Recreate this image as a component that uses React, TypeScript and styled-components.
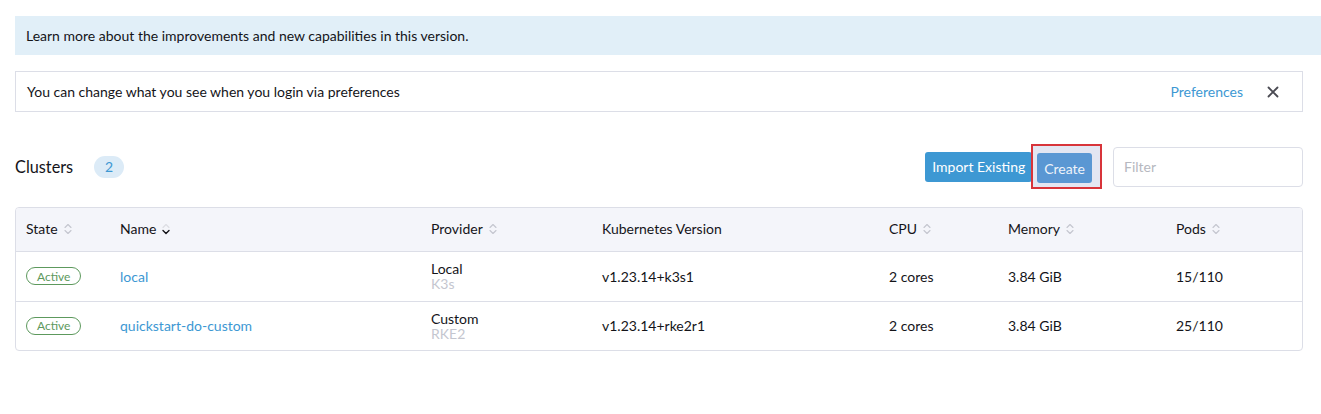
import React from 'react';
import styled, { createGlobalStyle } from 'styled-components';

const GlobalStyle = createGlobalStyle`
  html, body { margin: 0; padding: 0; background: #fff; }
  body {
    font-family: Lato, "Liberation Sans", sans-serif;
    font-size: 14px;
    color: #141419;
  }
  * { box-sizing: border-box; }
`;

type Cluster = {
  name: string;
  provider: string;
  distro: string;
  version: string;
  cpu: string;
  memory: string;
  pods: string;
};

const CLUSTERS: Cluster[] = [
  { name: 'local', provider: 'Local', distro: 'K3s', version: 'v1.23.14+k3s1', cpu: '2 cores', memory: '3.84 GiB', pods: '15/110' },
  { name: 'quickstart-do-custom', provider: 'Custom', distro: 'RKE2', version: 'v1.23.14+rke2r1', cpu: '2 cores', memory: '3.84 GiB', pods: '25/110' },
];

const COLUMNS: { label: string; sort: 'none' | 'idle' | 'desc' }[] = [
  { label: 'State', sort: 'idle' },
  { label: 'Name', sort: 'desc' },
  { label: 'Provider', sort: 'idle' },
  { label: 'Kubernetes Version', sort: 'none' },
  { label: 'CPU', sort: 'idle' },
  { label: 'Memory', sort: 'idle' },
  { label: 'Pods', sort: 'idle' },
];

const SortIcon = ({ mode }: { mode: 'idle' | 'desc' }) => (
  <svg width="10" height="14" viewBox="0 0 10 14" fill="none" strokeWidth="1.1" strokeLinecap="round" strokeLinejoin="round">
    <path d="M2 5.5 L5 2.5 L8 5.5" stroke={mode === 'desc' ? '#dcdde3' : '#c4c6cf'} />
    <path d="M2 8.5 L5 11.5 L8 8.5" stroke={mode === 'desc' ? '#141419' : '#c4c6cf'} strokeWidth={mode === 'desc' ? 1.4 : 1.1} />
  </svg>
);

const App = () => (
  <Page>
    <GlobalStyle />
    <Banner>Learn more about the improvements and new capabilities in this version.</Banner>
    <Notice>
      <span>You can change what you see when you login via preferences</span>
      <NoticeActions>
        <Link>Preferences</Link>
        <CloseButton aria-label="close">
          <svg width="12" height="12" viewBox="0 0 12 12">
            <path d="M1.5 1.5 L10.5 10.5 M10.5 1.5 L1.5 10.5" stroke="#4a4a52" strokeWidth="1.8" strokeLinecap="round" />
          </svg>
        </CloseButton>
      </NoticeActions>
    </Notice>

    <TitleBar>
      <Title>
        <h1>Clusters</h1>
        <Count>2</Count>
      </Title>
      <Actions>
        <Button>Import Existing</Button>
        <Highlight>
          <Button $light>Create</Button>
        </Highlight>
        <Filter placeholder="Filter" />
      </Actions>
    </TitleBar>

    <Table>
      <HeadRow>
        {COLUMNS.map(c => (
          <HeadCell key={c.label}>
            {c.label}
            {c.sort !== 'none' && <SortIcon mode={c.sort} />}
          </HeadCell>
        ))}
      </HeadRow>
      {CLUSTERS.map(c => (
        <Row key={c.name}>
          <Cell><StateBadge>Active</StateBadge></Cell>
          <Cell><Link>{c.name}</Link></Cell>
          <Cell>
            <Stack>
              <span>{c.provider}</span>
              <Sub>{c.distro}</Sub>
            </Stack>
          </Cell>
          <Cell>{c.version}</Cell>
          <Cell>{c.cpu}</Cell>
          <Cell>{c.memory}</Cell>
          <Cell>{c.pods}</Cell>
        </Row>
      ))}
    </Table>
  </Page>
);

export default App;

const Page = styled.div`
  padding: 16px 18px 40px 15px;
`;

const Banner = styled.div`
  background: #e1eff8;
  height: 39px;
  margin-right: -18px;
  padding: 0 11px;
  display: flex;
  align-items: center;
  font-size: 14px;
  color: #141419;
`;

const Notice = styled.div`
  margin-top: 16px;
  height: 41px;
  border: 1px solid #dcdee7;
  padding: 0 11px 0 11px;
  display: flex;
  align-items: center;
  justify-content: space-between;
`;

const NoticeActions = styled.div`
  display: flex;
  align-items: center;
  gap: 24px;
`;

const Link = styled.a`
  color: #3d98d3;
  cursor: pointer;
  text-decoration: none;
`;

const CloseButton = styled.span`
  display: flex;
  align-items: center;
  padding: 0 12px 0 0;
`;

const TitleBar = styled.div`
  margin-top: 31px;
  display: flex;
  align-items: center;
  justify-content: space-between;
  height: 47px;
`;

const Title = styled.div`
  display: flex;
  align-items: center;
  gap: 21px;
  h1 {
    margin: 0;
    font-size: 16.3px;
    font-weight: 400;
  }
`;

const Count = styled.span`
  display: inline-flex;
  align-items: center;
  justify-content: center;
  min-width: 30px;
  height: 22px;
  border-radius: 11px;
  background: #dcebf7;
  color: #3d98d3;
  font-size: 14px;
`;

const Actions = styled.div`
  display: flex;
  align-items: center;
`;

const Button = styled.button<{ $light?: boolean }>`
  height: 30px;
  padding: 0 7px;
  border: none;
  border-radius: 3px;
  background: ${p => (p.$light ? '#5a97d3' : '#3d98d3')};
  color: ${p => (p.$light ? '#eef3fa' : '#fff')};
  font-family: Lato, "Liberation Sans", sans-serif;
  font-size: 14px;
  cursor: pointer;
`;

const Highlight = styled.div`
  margin-left: -1px;
  margin-right: 11px;
  border: 2px solid #d8343a;
  background: #e3e6f2;
  padding: 7px 8px 4px 4px;
  height: 45px;
  display: flex;
`;

const Filter = styled.input`
  width: 190px;
  height: 40px;
  border: 1px solid #dcdee7;
  border-radius: 4px;
  padding: 0 10px;
  font-family: Lato, "Liberation Sans", sans-serif;
  font-size: 14px;
  &::placeholder { color: #b6b8c0; }
`;

const Table = styled.div`
  margin-top: 17px;
  border: 1px solid #dcdee7;
  border-radius: 4px;
  overflow: hidden;
`;

const GRID = '94px 311px 171px 287px 119px 168px 1fr';

const HeadRow = styled.div`
  display: grid;
  grid-template-columns: ${GRID};
  background: #f4f5fa;
  height: 44px;
  border-bottom: 1px solid #dcdee7;
`;

const HeadCell = styled.div`
  display: flex;
  align-items: center;
  gap: 5px;
  padding-left: 10px;
  padding-bottom: 2px;
  font-size: 14px;
  color: #141419;
`;

const Row = styled.div`
  display: grid;
  grid-template-columns: ${GRID};
  height: 49px;
  & + & { border-top: 1px solid #dcdee7; }
`;

const Cell = styled.div`
  display: flex;
  align-items: center;
  padding-left: 10px;
  padding-bottom: 1px;
  font-size: 14px;
`;

const Stack = styled.div`
  display: flex;
  flex-direction: column;
  line-height: 15px;
`;

const Sub = styled.span`
  color: #c4c6cf;
`;

const StateBadge = styled.span`
  display: inline-flex;
  align-items: center;
  height: 18px;
  padding: 0 10px;
  border: 1px solid #5d995d;
  border-radius: 10px;
  color: #5d995d;
  font-size: 12px;
`;
